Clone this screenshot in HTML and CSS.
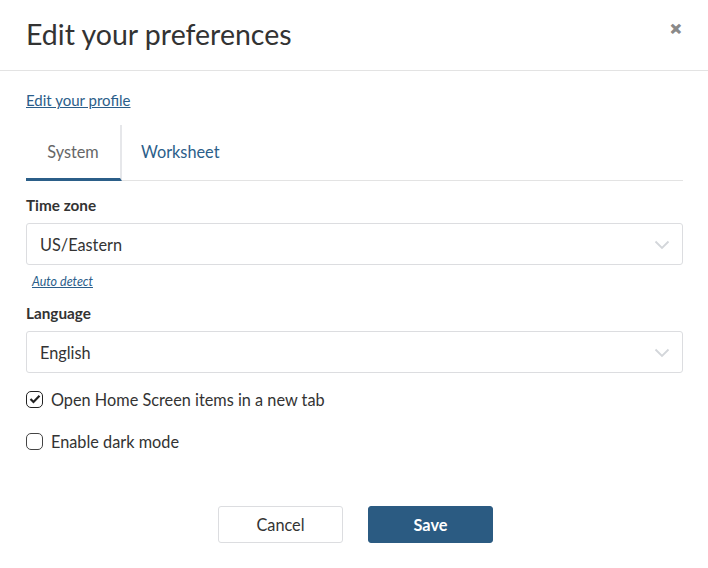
FILE: index.html
```html
<!DOCTYPE html>
<html>
<head>
<meta charset="utf-8">
<link rel="stylesheet" href="styles.css">
</head>
<body>
<div class="modal">
  <div class="header">
    <h1 class="title">Edit your preferences</h1>
    <span class="close">&#x2715;</span>
  </div>
  <div class="body">
    <a class="profile-link" href="#">Edit your profile</a>
    <div class="tabs">
      <div class="tab active">System</div>
      <div class="tab">Worksheet</div>
      <div class="tab-fill"></div>
    </div>
    <div class="field">
      <div class="label">Time zone</div>
      <div class="select"><span>US/Eastern</span>
        <svg class="chev" width="16" height="10" viewBox="0 0 16 10"><path d="M1.5 1.5 L8 8 L14.5 1.5" fill="none" stroke="#d3d6da" stroke-width="1.8"/></svg>
      </div>
      <a class="auto" href="#">Auto detect</a>
    </div>
    <div class="field lang">
      <div class="label">Language</div>
      <div class="select"><span>English</span>
        <svg class="chev" width="16" height="10" viewBox="0 0 16 10"><path d="M1.5 1.5 L8 8 L14.5 1.5" fill="none" stroke="#d3d6da" stroke-width="1.8"/></svg>
      </div>
    </div>
    <label class="check">
      <span class="box checked"><svg width="12" height="10" viewBox="0 0 12 10"><path d="M1.5 5 L4.5 8 L10.5 1.8" fill="none" stroke="#222" stroke-width="2.2"/></svg></span>
      <span>Open Home Screen items in a new tab</span>
    </label>
    <label class="check">
      <span class="box"></span>
      <span>Enable dark mode</span>
    </label>
  </div>
  <div class="footer">
    <button class="btn cancel">Cancel</button>
    <button class="btn save">Save</button>
  </div>
</div>
</body>
</html>
```
FILE: styles.css
```css
* { box-sizing: border-box; }
html, body { margin: 0; padding: 0; background: #fff; }
body {
  font-family: "Lato", "Open Sans", sans-serif;
  color: #333;
  width: 708px;
  height: 568px;
}
.modal { width: 708px; }
.header {
  height: 71px;
  border-bottom: 1px solid #e3e3e3;
  display: flex;
  align-items: flex-start;
  justify-content: space-between;
  padding: 17px 26px 0 26px;
}
.title {
  margin: 0;
  font-weight: 400;
  font-size: 28.5px;
  line-height: 34px;
  color: #333;
}
.close {
  font-size: 14px;
  font-weight: 700;
  color: #8a8a8a;
  margin-top: 3px;
  -webkit-text-stroke: 1px #8a8a8a;
}
.body { padding: 19px 25px 0 26px; }
.profile-link {
  display: inline-block;
  color: #2b5e8a;
  font-size: 15px;
  line-height: 20px;
  text-decoration: underline;
}
.tabs {
  display: flex;
  margin-top: 15px;
  height: 56px;
}
.tab {
  display: flex;
  align-items: center;
  justify-content: center;
  font-size: 16.3px;
  color: #2b5e8a;
  border-bottom: 1px solid #e3e3e3;
  padding: 0 20px 2px 19px;
}
.tab.active {
  color: #666;
  width: 96px;
  border-bottom: 3px solid #2b5e88;
  border-right: 2px solid #e6e7ea;
  padding: 0;
}
.tab-fill { flex: 1; border-bottom: 1px solid #e3e3e3; }
.field { margin-top: 14px; }
.label {
  font-weight: 700;
  font-size: 15.3px;
  line-height: 20px;
  color: #333;
}
.select {
  margin-top: 8px;
  height: 42px;
  border: 1px solid #dcdde0;
  border-radius: 3px;
  display: flex;
  align-items: center;
  justify-content: space-between;
  padding: 0 12px 0 13px;
  font-size: 16.3px;
  color: #333;
}
.chev { margin-top: 2px; }
.auto {
  display: inline-block;
  margin: 9px 0 0 6px;
  font-size: 12.5px;
  font-style: italic;
  color: #2b5e8a;
  text-decoration: underline;
  line-height: 16px;
}
.lang { margin-top: 13px; }
.check {
  display: flex;
  align-items: center;
  gap: 8px;
  font-size: 16.3px;
  color: #333;
  margin-top: 16px;
  height: 20px;
}
.check + .check { margin-top: 22px; }
.box {
  width: 17px;
  height: 17px;
  border: 1.5px solid #444;
  border-radius: 5px;
  display: flex;
  align-items: center;
  justify-content: center;
}
.box.checked { border-color: #222; }
.footer {
  display: flex;
  justify-content: center;
  gap: 25px;
  margin-top: 55px;
  padding-left: 3px;
}
.btn {
  width: 125px;
  height: 37px;
  border-radius: 3px;
  font-family: inherit;
  font-size: 16.3px;
}
.cancel { background: #fff; border: 1px solid #dcdde0; color: #333; }
.save { background: #2b5b82; border: 1px solid #2b5b82; color: #fff; font-weight: 700; }
```
